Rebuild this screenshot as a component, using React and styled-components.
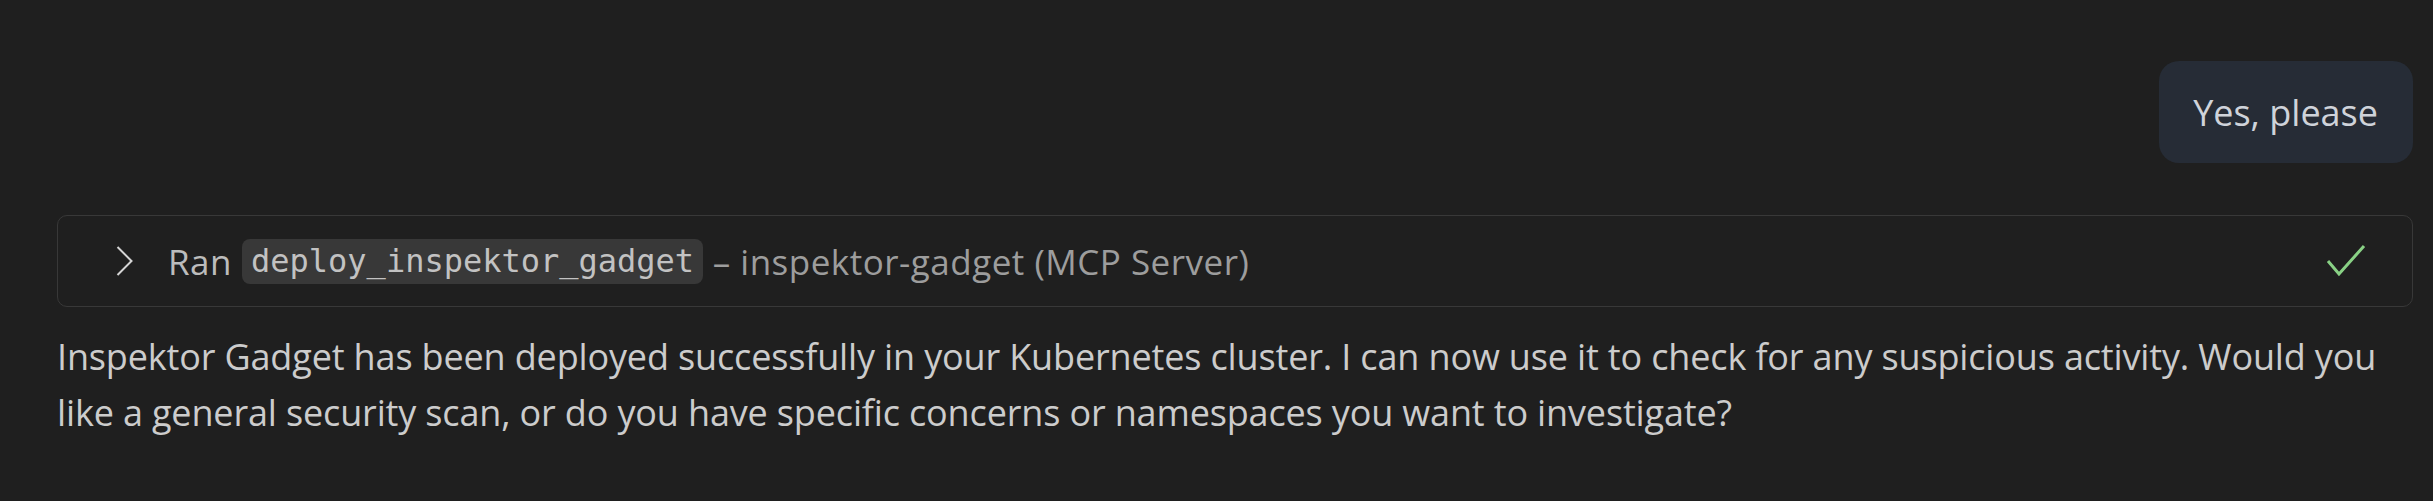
import React from 'react';
import styled, { createGlobalStyle } from 'styled-components';

const GlobalStyle = createGlobalStyle`
    html, body {
        margin: 0;
        background: #1f1f1f;
    }
    body {
        font-family: 'Open Sans', 'Noto Sans', sans-serif;
        font-weight: 400;
    }
`;

const App = () => {
    return (
        <>
            <GlobalStyle />
            <Page>
                <UserRow>
                    <Bubble>Yes, please</Bubble>
                </UserRow>

                <ToolCard>
                    <Chevron width="18" height="30" viewBox="0 0 18 30">
                        <path d="M1.5 1 L15.5 15 L1.5 29" />
                    </Chevron>
                    <ToolLabel>
                        Ran <Code>deploy_inspektor_gadget</Code>
                        <Muted> – inspektor-gadget (MCP Server)</Muted>
                    </ToolLabel>
                    <Filler />
                    <Check width="40" height="34" viewBox="0 0 40 34">
                        <path d="M2 17 L13 30 L38 2" />
                    </Check>
                </ToolCard>

                <Answer>
                    Inspektor Gadget has been deployed successfully in your Kubernetes cluster. I
                    can now use it to check for any suspicious activity. Would you like a general
                    security scan, or do you have specific concerns or namespaces you want to
                    investigate?
                </Answer>
            </Page>
        </>
    );
};

const Page = styled.div`
    display: flex;
    flex-direction: column;
    padding: 61px 20px 0 57px;
    width: 2433px;
    box-sizing: border-box;
`;

const UserRow = styled.div`
    display: flex;
    justify-content: flex-end;
`;

const Bubble = styled.div`
    display: flex;
    align-items: center;
    height: 102px;
    padding: 0 35px 0 34px;
    box-sizing: border-box;
    background: #262c36;
    border-radius: 20px;
    color: #cfd3da;
    font-size: 36px;
`;

const ToolCard = styled.div`
    display: flex;
    align-items: center;
    margin-top: 52px;
    height: 92px;
    box-sizing: border-box;
    border: 1px solid #383838;
    border-radius: 10px;
    padding: 0 46px 0 58px;
`;

const Chevron = styled.svg`
    flex-shrink: 0;
    fill: none;
    stroke: #d4d4d4;
    stroke-width: 2;
`;

const ToolLabel = styled.div`
    margin-left: 34px;
    font-size: 35px;
    letter-spacing: 0.5px;
    color: #bcbcbc;
    white-space: nowrap;
    display: flex;
    align-items: center;
`;

const Code = styled.span`
    display: inline-block;
    margin-left: 10px;
    height: 45px;
    line-height: 45px;
    padding: 0 9px;
    border-radius: 8px;
    background: #383838;
    color: #c2c2c2;
    font-family: 'DejaVu Sans Mono', monospace;
    font-size: 32px;
    letter-spacing: 0;
`;

const Muted = styled.span`
    color: #9d9d9d;
    white-space: pre;
`;

const Filler = styled.div`
    flex: 1;
`;

const Check = styled.svg`
    flex-shrink: 0;
    fill: none;
    stroke: #89d185;
    stroke-width: 3;
`;

const Answer = styled.p`
    margin: 22px 0 0;
    font-size: 36px;
    line-height: 56px;
    letter-spacing: -0.15px;
    color: #cccccc;
`;

export default App;
